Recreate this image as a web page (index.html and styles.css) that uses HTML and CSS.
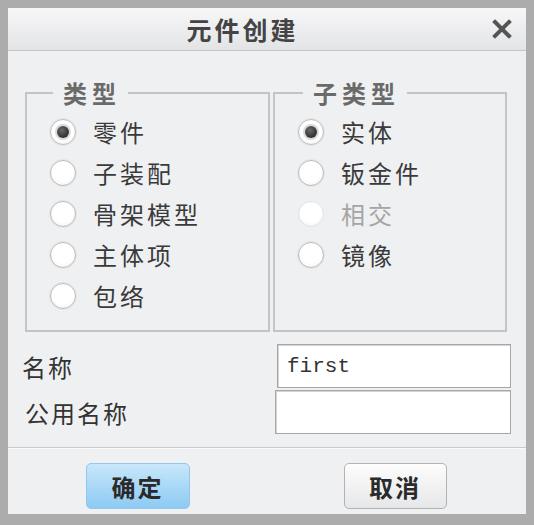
FILE: index.html
```html
<!DOCTYPE html>
<html lang="zh-CN">
<head>
    <meta charset="UTF-8">
    <meta name="viewport" content="width=device-width, initial-scale=1.0">
    <title>元件创建</title>
    <link rel="stylesheet" href="styles.css">
</head>
<body>
    <div class="window">
        <div class="titlebar">
            <div class="title">元件创建</div>
            <div class="close">
                <svg width="20" height="20" viewBox="0 0 20 20">
                    <path d="M3 3 L17 17 M17 3 L3 17" stroke="#555" stroke-width="4" stroke-linecap="square"/>
                </svg>
            </div>
        </div>
        <div class="content">
            <div class="groups">
                <fieldset class="group group-type">
                    <legend>类型</legend>
                    <div class="radio checked"><span class="dot"></span><span>零件</span></div>
                    <div class="radio"><span class="dot"></span><span>子装配</span></div>
                    <div class="radio"><span class="dot"></span><span>骨架模型</span></div>
                    <div class="radio"><span class="dot"></span><span>主体项</span></div>
                    <div class="radio"><span class="dot"></span><span>包络</span></div>
                </fieldset>
                <fieldset class="group group-sub">
                    <legend>子类型</legend>
                    <div class="radio checked"><span class="dot"></span><span>实体</span></div>
                    <div class="radio"><span class="dot"></span><span>钣金件</span></div>
                    <div class="radio disabled"><span class="dot"></span><span>相交</span></div>
                    <div class="radio"><span class="dot"></span><span>镜像</span></div>
                </fieldset>
            </div>
            <div class="form">
                <div class="row">
                    <label class="name-label">名称</label>
                    <input class="field field-name" type="text" value="first">
                </div>
                <div class="row">
                    <label class="common-label">公用名称</label>
                    <input class="field field-common" type="text" value="">
                </div>
            </div>
        </div>
        <div class="footer">
            <button class="btn btn-ok">确定</button>
            <button class="btn btn-cancel">取消</button>
        </div>
    </div>
</body>
</html>
```

FILE: styles.css
```css
* {
    box-sizing: border-box;
}
body {
    margin: 0;
    font-family: "Noto Sans CJK SC", "Liberation Sans", sans-serif;
    color: #333;
    background: #a9a9a9;
}
.window {
    width: 534px;
    height: 525px;
    border: 8px solid #acacac;
    border-bottom-width: 11px;
    background: #eff0f2;
    display: flex;
    flex-direction: column;
}
.titlebar {
    height: 43px;
    display: flex;
    align-items: center;
    background: linear-gradient(#f7f7f8, #e3e4e6);
    border-bottom: 1px solid #c4c5c7;
}
.title {
    flex: 1;
    text-align: center;
    font-size: 25px;
    font-weight: bold;
    letter-spacing: 3px;
    color: #444;
    line-height: 1;
}
.close {
    width: 49px;
    display: flex;
    justify-content: center;
}
.content {
    flex: 1;
    padding-top: 30px;
}
.groups {
    display: flex;
    gap: 3px;
    padding-left: 17px;
}
.group {
    margin: 0;
    border: 2px solid #c3c4c6;
    padding: 6px 0 14px 23px;
}
.group-type {
    width: 245px;
}
.group-sub {
    width: 234px;
}
.group legend {
    font-size: 24px;
    font-weight: bold;
    letter-spacing: 5px;
    line-height: 24px;
    color: #6a6a6a;
    padding: 0 7px 0 10px;
}
.group-type legend {
    margin-left: 3px;
}
.group-sub legend {
    margin-left: 5px;
}
.radio {
    height: 41px;
    display: flex;
    align-items: center;
    gap: 17px;
    font-size: 24px;
    letter-spacing: 3px;
    color: #3a3a3a;
}
.dot {
    width: 26px;
    height: 26px;
    border-radius: 50%;
    border: 1px solid #bcbcbc;
    background: radial-gradient(circle at 50% 40%, #ffffff 55%, #ececec);
    box-shadow: 0 0 0 1px #e6e6e6;
    display: flex;
    align-items: center;
    justify-content: center;
}
.radio.checked .dot::after {
    content: "";
    width: 12px;
    height: 12px;
    border-radius: 50%;
    background: radial-gradient(circle at 40% 35%, #6a6a6a, #151515);
    box-shadow: 0 0 0 2px #d9d9d9;
}
.radio.disabled {
    color: #a5a5a5;
}
.radio.disabled .dot {
    border-color: #e2e2e2;
    box-shadow: none;
}
.form {
    margin-top: 12px;
    display: flex;
    flex-direction: column;
    gap: 2px;
    padding-right: 15px;
}
.row {
    display: flex;
    align-items: center;
    justify-content: space-between;
    height: 44px;
}
.row label {
    font-size: 24px;
    letter-spacing: 2px;
    color: #333;
}
.name-label {
    padding-left: 14px;
}
.common-label {
    padding-left: 17px;
}
.field {
    height: 44px;
    border: 1px solid #a7a7a7;
    box-shadow: inset 1px 1px 0 #d4d4d4;
    background: #fff;
    font-family: "Liberation Mono", monospace;
    font-size: 21px;
    color: #333;
    padding: 0 9px;
    outline: none;
}
.field-name {
    width: 234px;
}
.field-common {
    width: 236px;
}
.footer {
    height: 67px;
    border-top: 1px solid #c9cacc;
    box-shadow: inset 0 1px 0 #fafafa;
    display: grid;
    grid-template-columns: 1fr 1fr;
    justify-items: center;
    align-items: start;
    padding-top: 15px;
}
.btn {
    height: 46px;
    font-family: "Noto Sans CJK SC", sans-serif;
    font-size: 24px;
    font-weight: bold;
    letter-spacing: 2px;
    color: #2a2a2a;
    border-radius: 5px;
    cursor: pointer;
}
.btn-ok {
    width: 104px;
    background: linear-gradient(#c8e7fb, #8dcaf3);
    border: 1px solid #94c8ea;
}
.btn-cancel {
    width: 103px;
    margin-right: 3px;
    background: linear-gradient(#fdfdfd, #e6e7e8);
    border: 1px solid #b3b3b3;
}
```
